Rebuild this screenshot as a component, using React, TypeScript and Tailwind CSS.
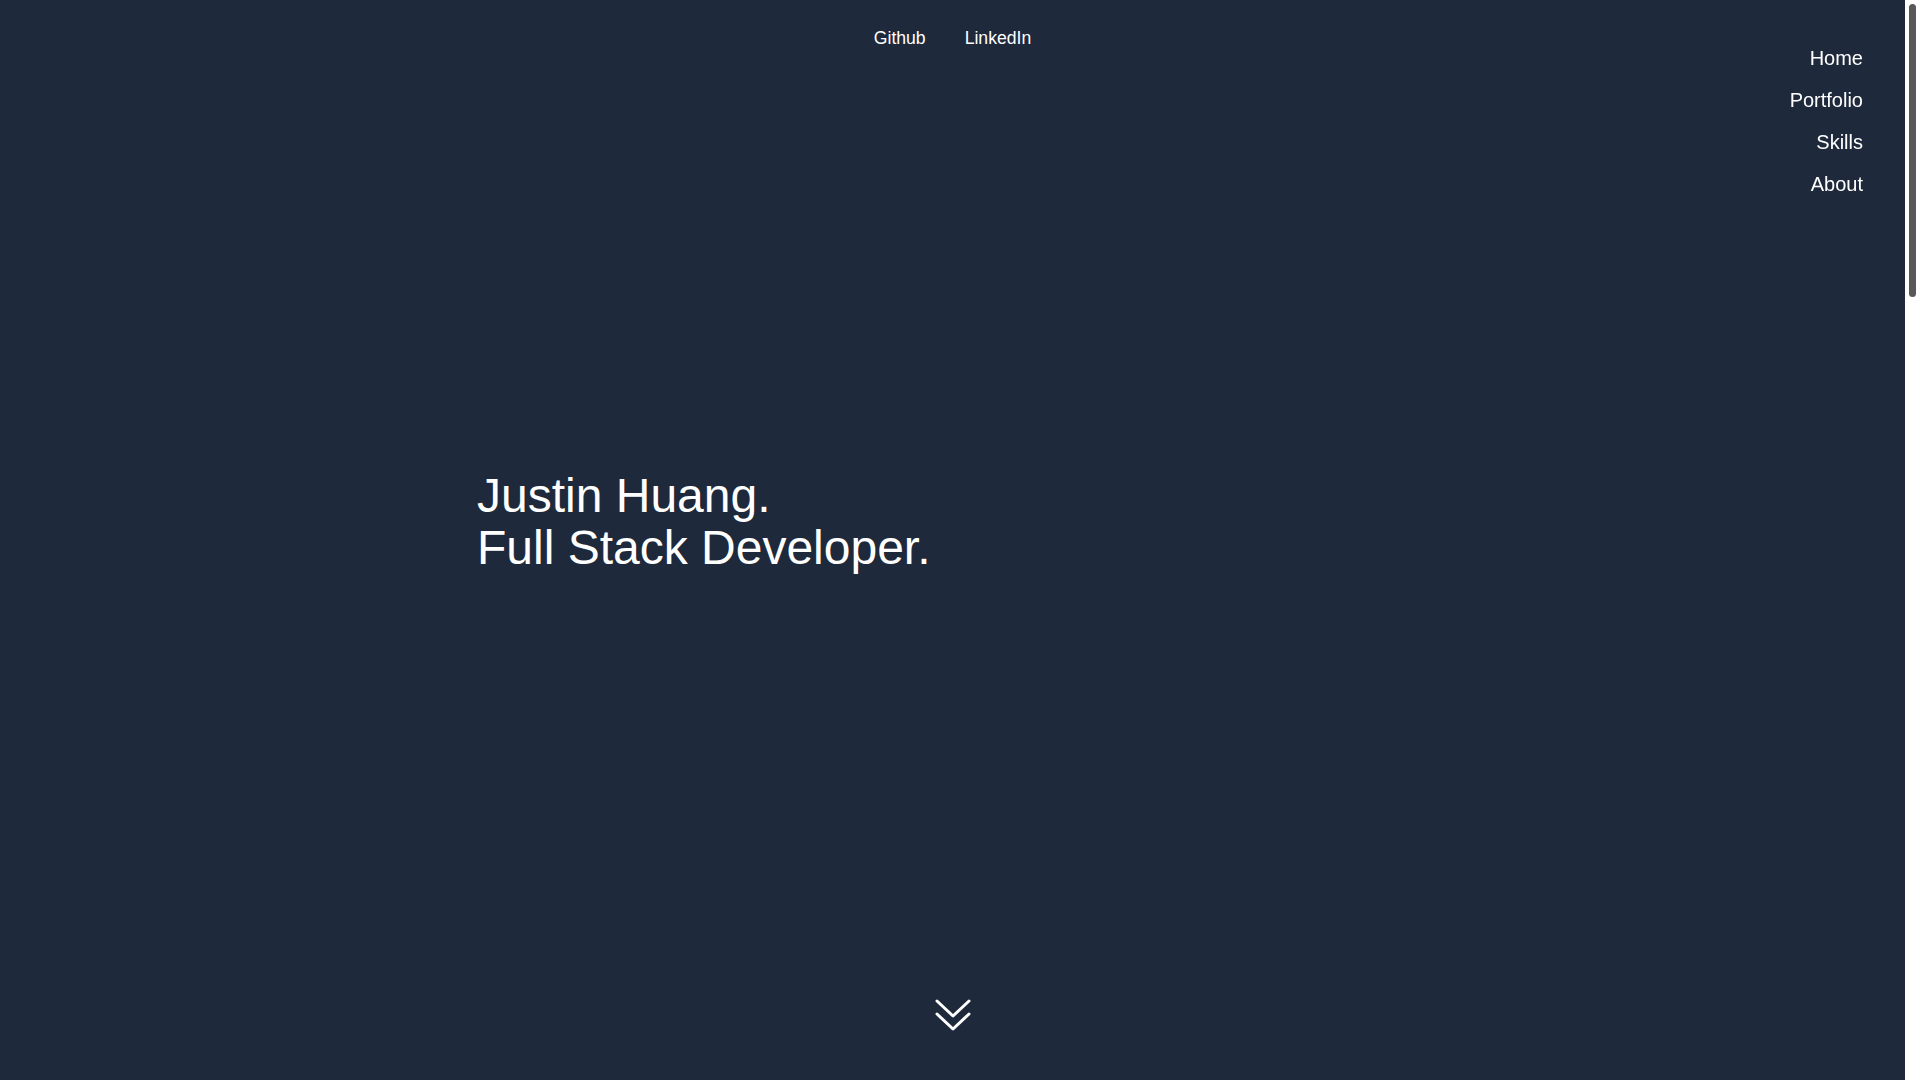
import React from "react";

export default function App() {
  return (
    <div className="flex h-screen overflow-hidden bg-[#1e293b] text-white font-['Liberation_Sans',Arial,sans-serif]">
      <main className="relative flex-1 flex flex-col h-screen">
        <nav className="fixed top-[37px] right-[57px] flex flex-col items-end text-[20px] leading-[42px] z-10">
          <a href="#home">Home</a>
          <a href="#portfolio">Portfolio</a>
          <a href="#skills">Skills</a>
          <a href="#about">About</a>
        </nav>
        <div className="flex justify-center gap-[39px] pt-[28px] text-[17.6px] leading-[20px]">
          <a href="#github">Github</a>
          <a href="#linkedin">LinkedIn</a>
        </div>
        <h1 className="mt-[422px] pl-[477px] text-[48px] leading-[52px] font-normal">
          Justin Huang.
          <br />
          Full Stack Developer.
        </h1>
        <div className="mt-auto pb-[46px] flex justify-center">
          <svg width="38" height="36" viewBox="0 0 38 36" fill="none" stroke="white" strokeWidth="3" strokeLinecap="round" strokeLinejoin="round">
            <path d="M3 3 L19 18 L35 3" />
            <path d="M3 16 L19 31 L35 16" />
          </svg>
        </div>
      </main>
      <aside className="w-[15px] h-screen bg-white pt-[4px] pl-[4px]">
        <div className="w-[7px] h-[293px] rounded-full bg-[#585858]"></div>
      </aside>
    </div>
  );
}
